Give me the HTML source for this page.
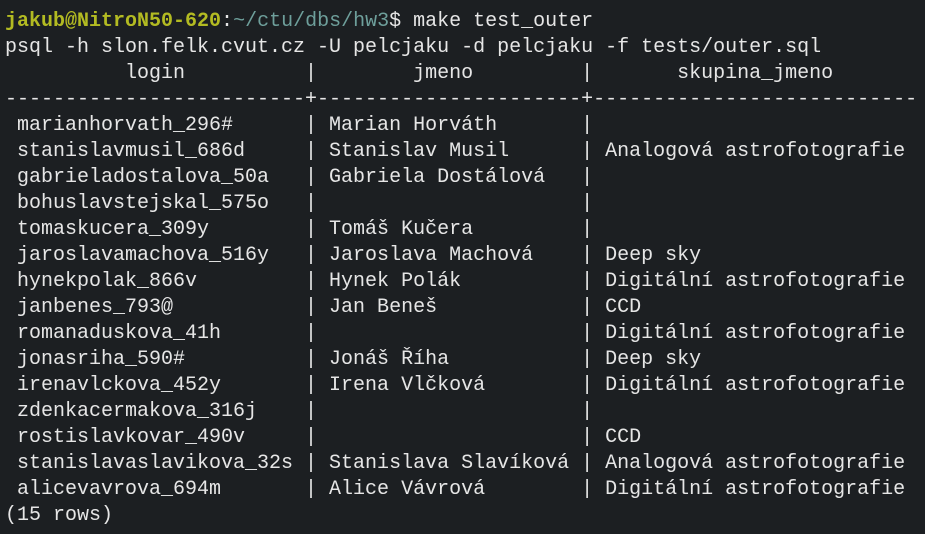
<!DOCTYPE html>
<html><head><meta charset="utf-8"><style>
html,body{margin:0;padding:0;background:#1c1f22;width:925px;height:534px;overflow:hidden}
pre{margin:0;padding:9px 0 0 5px;font-family:"Liberation Mono","DejaVu Sans Mono",monospace;font-size:20px;line-height:26px;color:#e6e6e6;white-space:pre}
.u{color:#b3bb22;font-weight:bold}.p{color:#6e9f9b}
</style></head><body><pre><span class="u">jakub@NitroN50-620</span>:<span class="p">~/ctu/dbs/hw3</span>$ make test_outer
psql -h slon.felk.cvut.cz -U pelcjaku -d pelcjaku -f tests/outer.sql
          login          |        jmeno         |       skupina_jmeno
-------------------------+----------------------+---------------------------
 marianhorvath_296#      | Marian Horváth       |
 stanislavmusil_686d     | Stanislav Musil      | Analogová astrofotografie
 gabrieladostalova_50a   | Gabriela Dostálová   |
 bohuslavstejskal_575o   |                      |
 tomaskucera_309y        | Tomáš Kučera         |
 jaroslavamachova_516y   | Jaroslava Machová    | Deep sky
 hynekpolak_866v         | Hynek Polák          | Digitální astrofotografie
 janbenes_793@           | Jan Beneš            | CCD
 romanaduskova_41h       |                      | Digitální astrofotografie
 jonasriha_590#          | Jonáš Říha           | Deep sky
 irenavlckova_452y       | Irena Vlčková        | Digitální astrofotografie
 zdenkacermakova_316j    |                      |
 rostislavkovar_490v     |                      | CCD
 stanislavaslavikova_32s | Stanislava Slavíková | Analogová astrofotografie
 alicevavrova_694m       | Alice Vávrová        | Digitální astrofotografie
(15 rows)
</pre></body></html>
